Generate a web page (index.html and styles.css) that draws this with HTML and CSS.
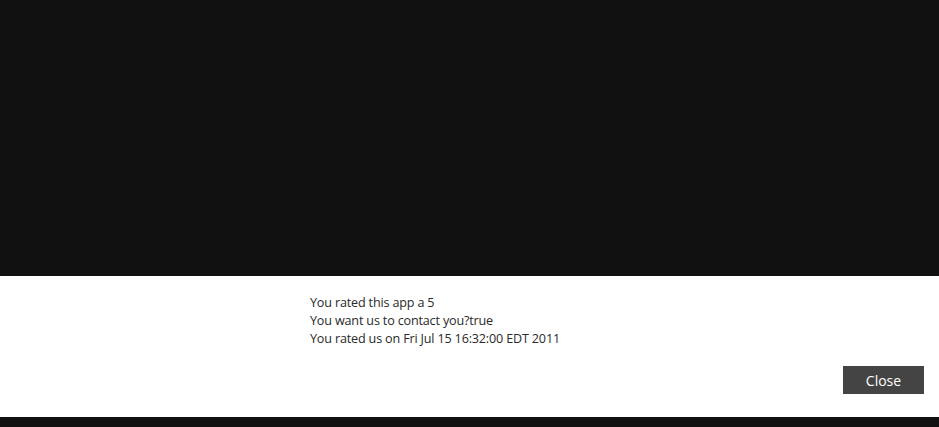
FILE: index.html
```html
<!DOCTYPE html>
<html>
<head>
<meta charset="utf-8">
<link rel="stylesheet" href="styles.css">
</head>
<body>
<div class="top"></div>
<div class="panel">
  <div class="msg">
    <div class="line">You rated this app a 5</div>
    <div class="line">You want us to contact you?true</div>
    <div class="line">You rated us on Fri Jul 15 16:32:00 EDT 2011</div>
  </div>
  <div class="actions"><button class="close">Close</button></div>
</div>
<div class="bottom"></div>
</body>
</html>
```
FILE: styles.css
```css
html, body { margin: 0; padding: 0; }
body {
  width: 939px;
  height: 427px;
  background: #111111;
  display: flex;
  flex-direction: column;
  font-family: "Open Sans", "Noto Sans", sans-serif;
  overflow: hidden;
}
.top { height: 276px; background: #111111; }
.panel {
  height: 141px;
  background: #ffffff;
  display: flex;
  flex-direction: column;
}
.msg {
  padding: 18px 0 0 310px;
  color: #2a2a2a;
  font-size: 12.6px;
  letter-spacing: -0.17px;
  line-height: 18px;
}
.actions {
  display: flex;
  justify-content: flex-end;
  padding: 18px 15px 0 0;
}
.close {
  width: 81px;
  height: 28px;
  background: #444444;
  color: #ffffff;
  border: none;
  font-family: "Open Sans", "Noto Sans", sans-serif;
  font-size: 14px;
  padding: 0;
}
.bottom { flex: 1; background: #111111; }
```
